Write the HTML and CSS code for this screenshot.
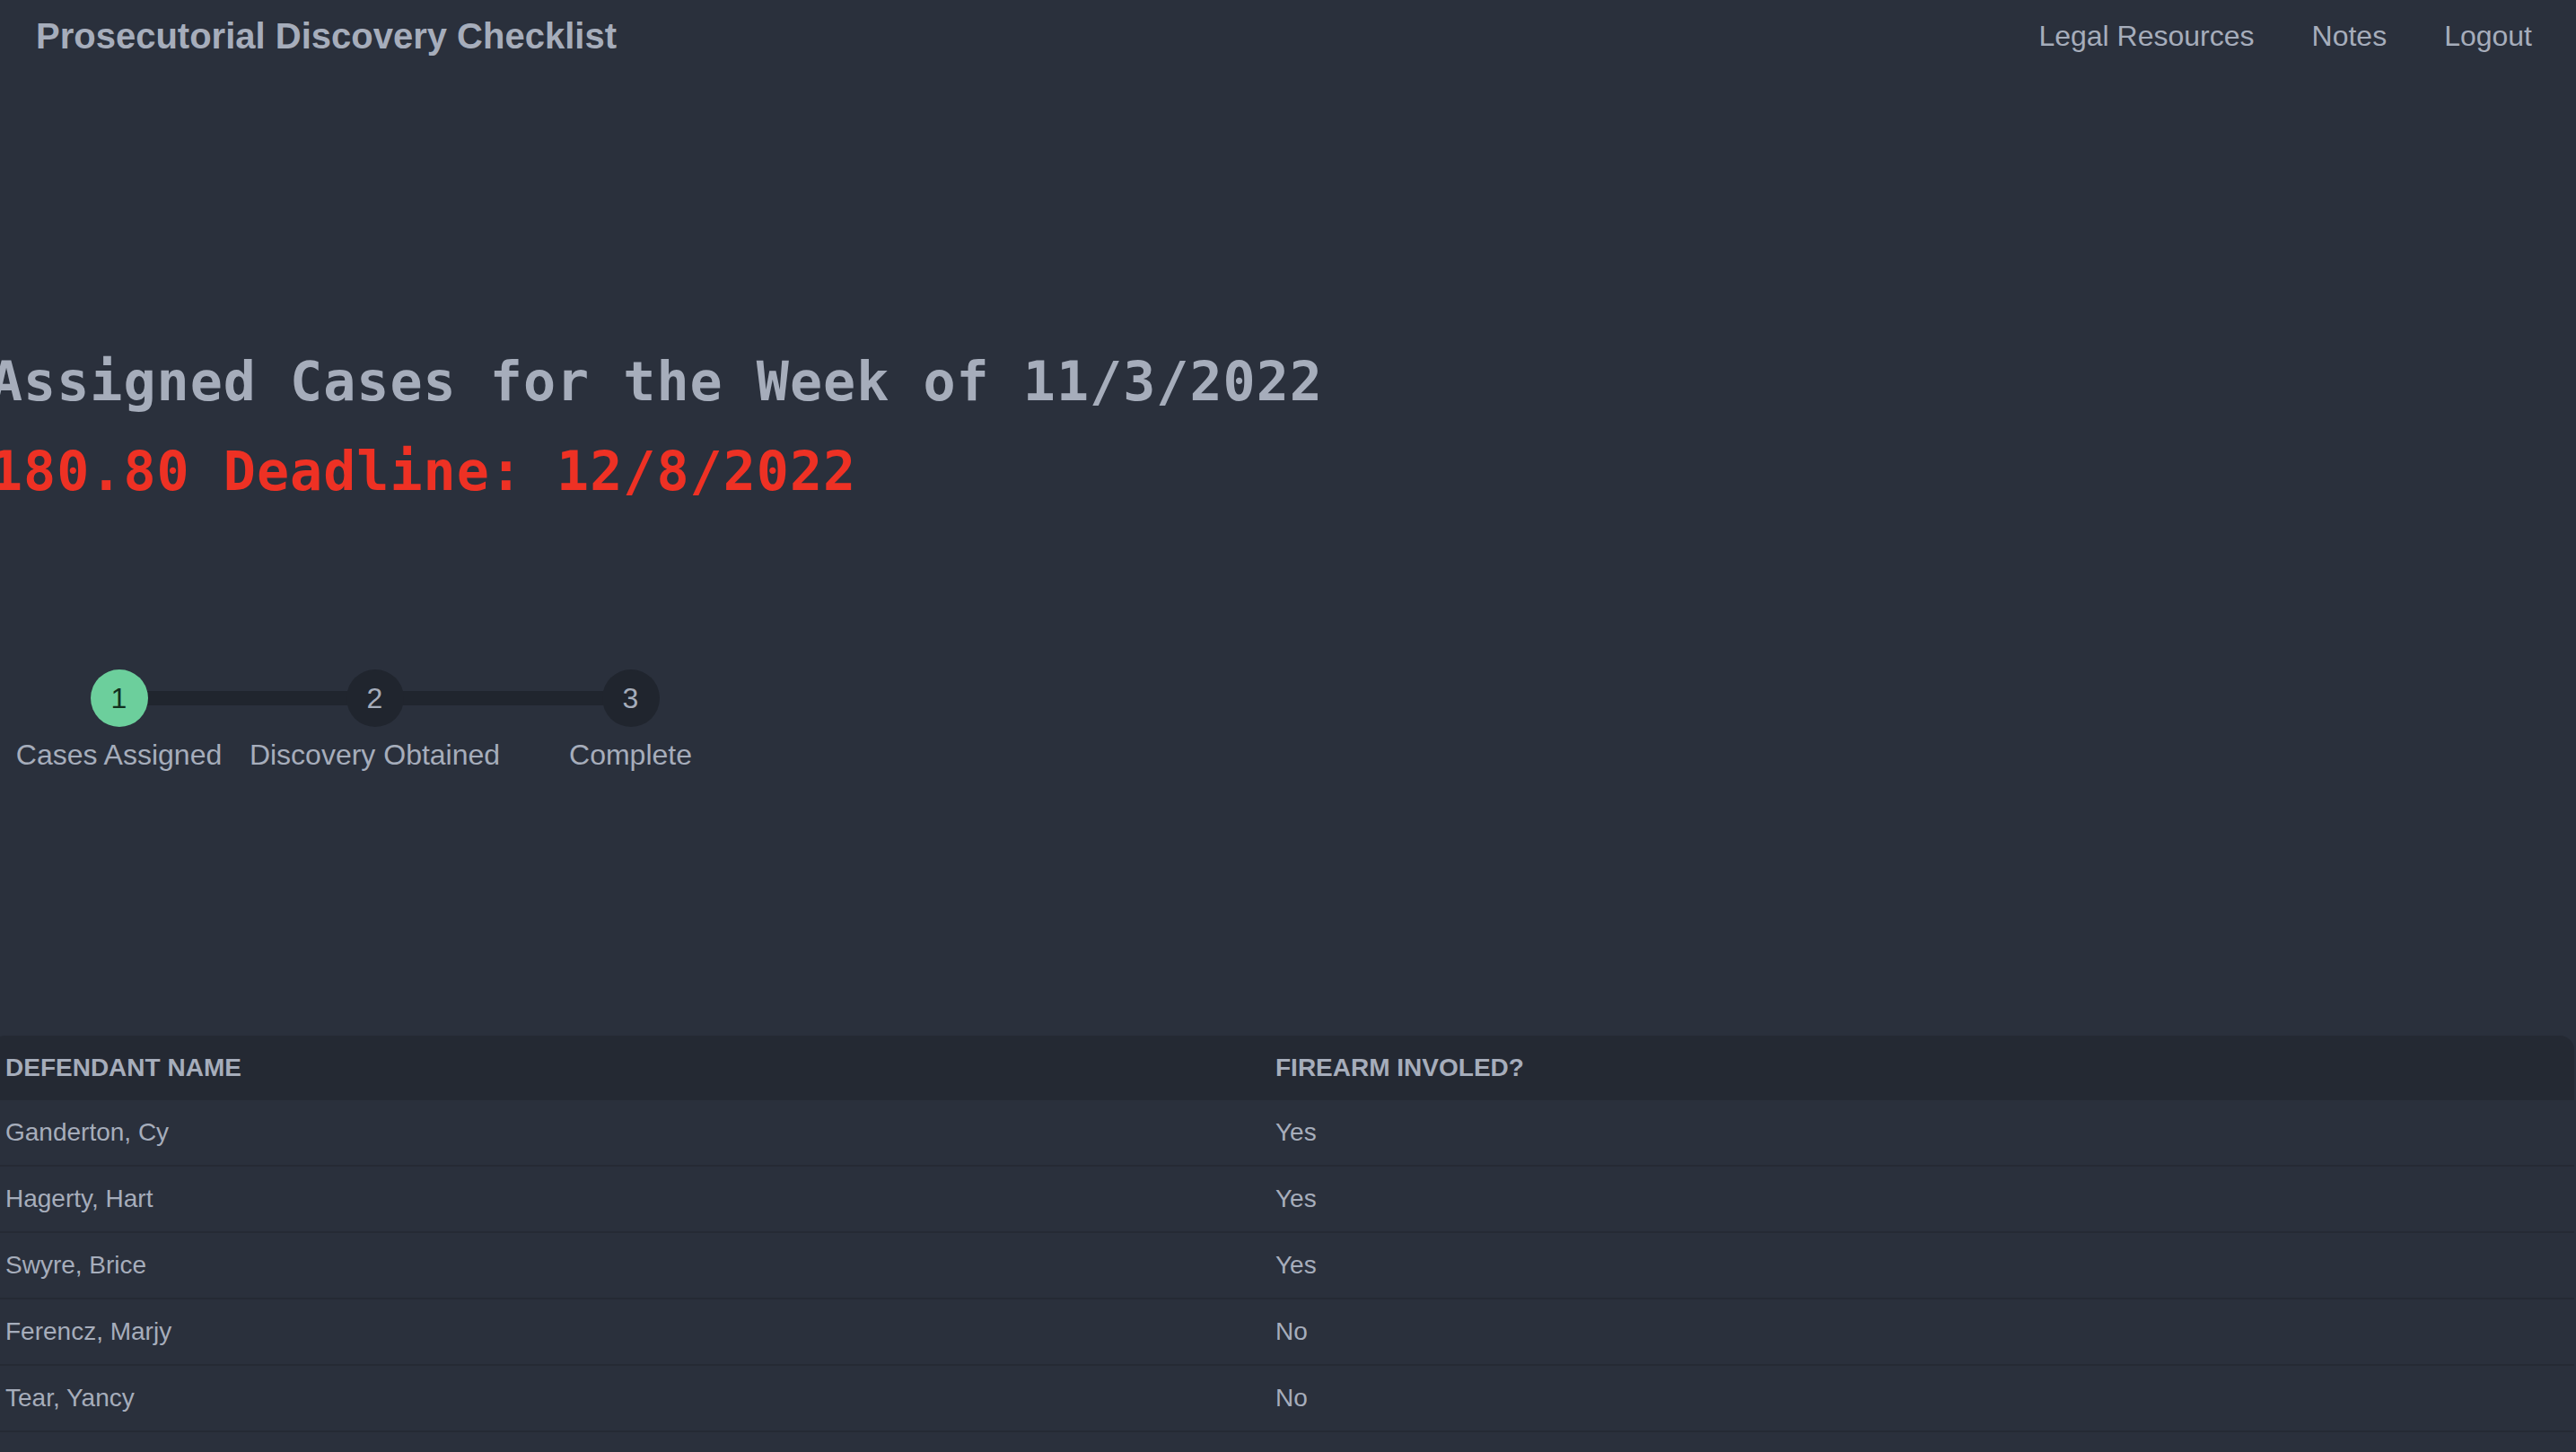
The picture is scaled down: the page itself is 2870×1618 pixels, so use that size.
FILE: index.html
```html
<!DOCTYPE html>
<html lang="en">
<head>
<meta charset="utf-8">
<title>Prosecutorial Discovery Checklist</title>
<link rel="stylesheet" href="styles.css">
</head>
<body>
<nav class="navbar">
  <a class="brand" href="#">Prosecutorial Discovery Checklist</a>
  <ul class="nav-links">
    <li><a href="#">Legal Resources</a></li>
    <li><a href="#">Notes</a></li>
    <li><a href="#">Logout</a></li>
  </ul>
</nav>
<main class="content">
  <header class="week">
    <h1 class="week-title">Assigned Cases for the Week of 11/3/2022</h1>
    <h2 class="deadline">180.80 Deadline: 12/8/2022</h2>
  </header>
  <ul class="steps">
    <li class="step done"><span class="dot">1</span><span class="label">Cases Assigned</span></li>
    <li class="step"><span class="dot">2</span><span class="label">Discovery Obtained</span></li>
    <li class="step"><span class="dot">3</span><span class="label">Complete</span></li>
  </ul>
  <table class="cases">
    <thead>
      <tr><th class="col-name">Defendant Name</th><th>Firearm Involed?</th></tr>
    </thead>
    <tbody>
      <tr><td>Ganderton, Cy</td><td>Yes</td></tr>
      <tr><td>Hagerty, Hart</td><td>Yes</td></tr>
      <tr><td>Swyre, Brice</td><td>Yes</td></tr>
      <tr><td>Ferencz, Marjy</td><td>No</td></tr>
      <tr><td>Tear, Yancy</td><td>No</td></tr>
    </tbody>
  </table>
</main>
</body>
</html>
```
FILE: styles.css
```css
* { box-sizing: border-box; }
html, body {
  margin: 0;
  padding: 0;
  background: #2a303c;
  color: #a6adbb;
  font-family: "Liberation Sans", Arial, sans-serif;
  overflow: hidden;
}
a { color: inherit; text-decoration: none; }

.navbar {
  height: 80px;
  display: flex;
  align-items: center;
  justify-content: space-between;
  padding: 0 49px 0 40px;
}
.brand {
  font-size: 40px;
  font-weight: 700;
  line-height: 48px;
}
.nav-links {
  list-style: none;
  margin: 0;
  padding: 0;
  display: flex;
  gap: 64px;
  font-size: 32px;
  line-height: 40px;
}

.content { display: flex; flex-direction: column; }

.week {
  margin: 295px 0 0 -11px;
  font-family: "DejaVu Sans Mono", "Liberation Mono", monospace;
  font-weight: 700;
  font-size: 60px;
  letter-spacing: 1px;
}
.week-title, .deadline {
  margin: 0;
  font-size: 60px;
  line-height: 100px;
  white-space: nowrap;
}
.week-title { color: #a6adbb; }
.deadline { color: #ee3124; }

.steps {
  list-style: none;
  margin: 171px 0 0 -10px;
  padding: 0;
  display: grid;
  grid-template-columns: repeat(3, 285px);
  width: max-content;
}
.step {
  position: relative;
  display: flex;
  flex-direction: column;
  align-items: center;
}
.step + .step::before {
  content: "";
  position: absolute;
  top: 24px;
  left: -50%;
  width: 100%;
  height: 16px;
  background: #20252e;
  z-index: 0;
}
.dot {
  position: relative;
  z-index: 1;
  width: 64px;
  height: 64px;
  border-radius: 50%;
  background: #20252e;
  color: #a6adbb;
  font-size: 32px;
  line-height: 64px;
  text-align: center;
}
.step.done .dot { background: #6ccf9c; color: #12301f; }
.label {
  margin-top: 11px;
  font-size: 32px;
  line-height: 40px;
  white-space: nowrap;
}

.cases {
  margin: 293px 0 0 -10px;
  width: 2878px;
  border-collapse: separate;
  border-spacing: 0;
  font-size: 28px;
  line-height: 40px;
  text-align: left;
}
.cases th, .cases td { padding: 16px; }
.cases th {
  background: #242933;
  font-weight: 700;
  text-transform: uppercase;
}
.cases th.col-name { width: 1415px; border-top-left-radius: 16px; }
.cases th:last-child { border-top-right-radius: 16px; }
.cases td { border-bottom: 2px solid #252a34; }
```
